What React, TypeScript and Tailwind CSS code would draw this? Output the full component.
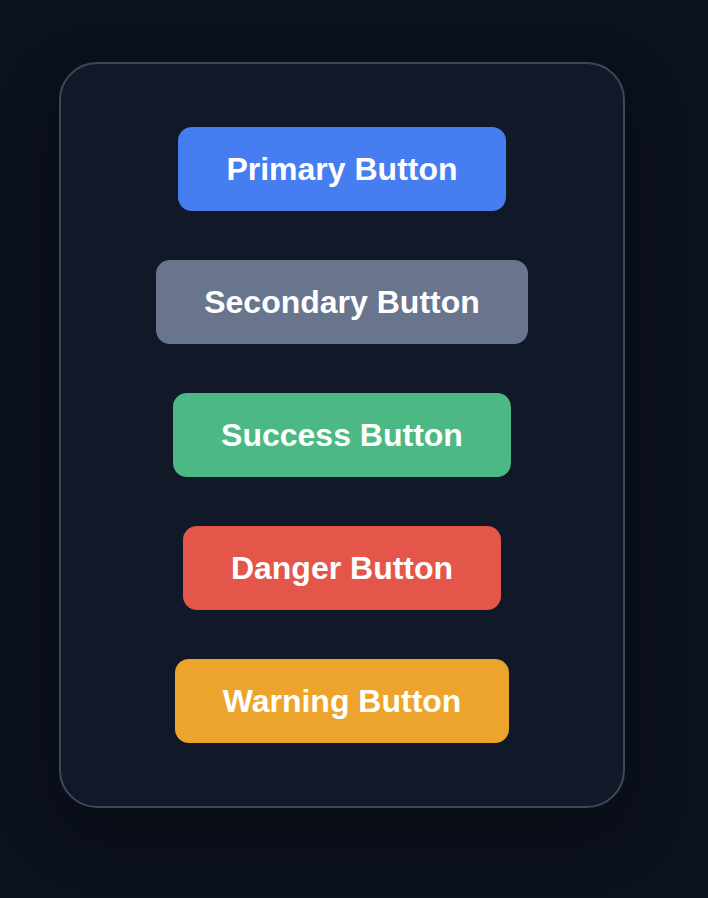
const buttons = [
  { label: "Primary Button", className: "bg-[#467ef2]" },
  { label: "Secondary Button", className: "bg-[#68758d]" },
  { label: "Success Button", className: "bg-[#4cb985]" },
  { label: "Danger Button", className: "bg-[#e4564a]" },
  { label: "Warning Button", className: "bg-[#eca42c]" },
]

export default function App() {
  return (
    <div className="min-h-[898px] w-full bg-[#0b111d] pt-[62px] pl-[59px]" style={{ fontFamily: '"Liberation Sans", Arial, sans-serif' }}>
      <div className="flex w-[566px] flex-col items-center gap-[49px] rounded-[38px] border-2 border-[#3f4859] bg-[#111827] py-[63px] shadow-[0_24px_60px_rgba(0,0,0,0.3)]">
        {buttons.map((b) => (
          <button
            key={b.label}
            className={`${b.className} rounded-[14px] px-12 py-6 text-[32px] leading-[36px] font-bold text-white`}
          >
            {b.label}
          </button>
        ))}
      </div>
    </div>
  )
}
